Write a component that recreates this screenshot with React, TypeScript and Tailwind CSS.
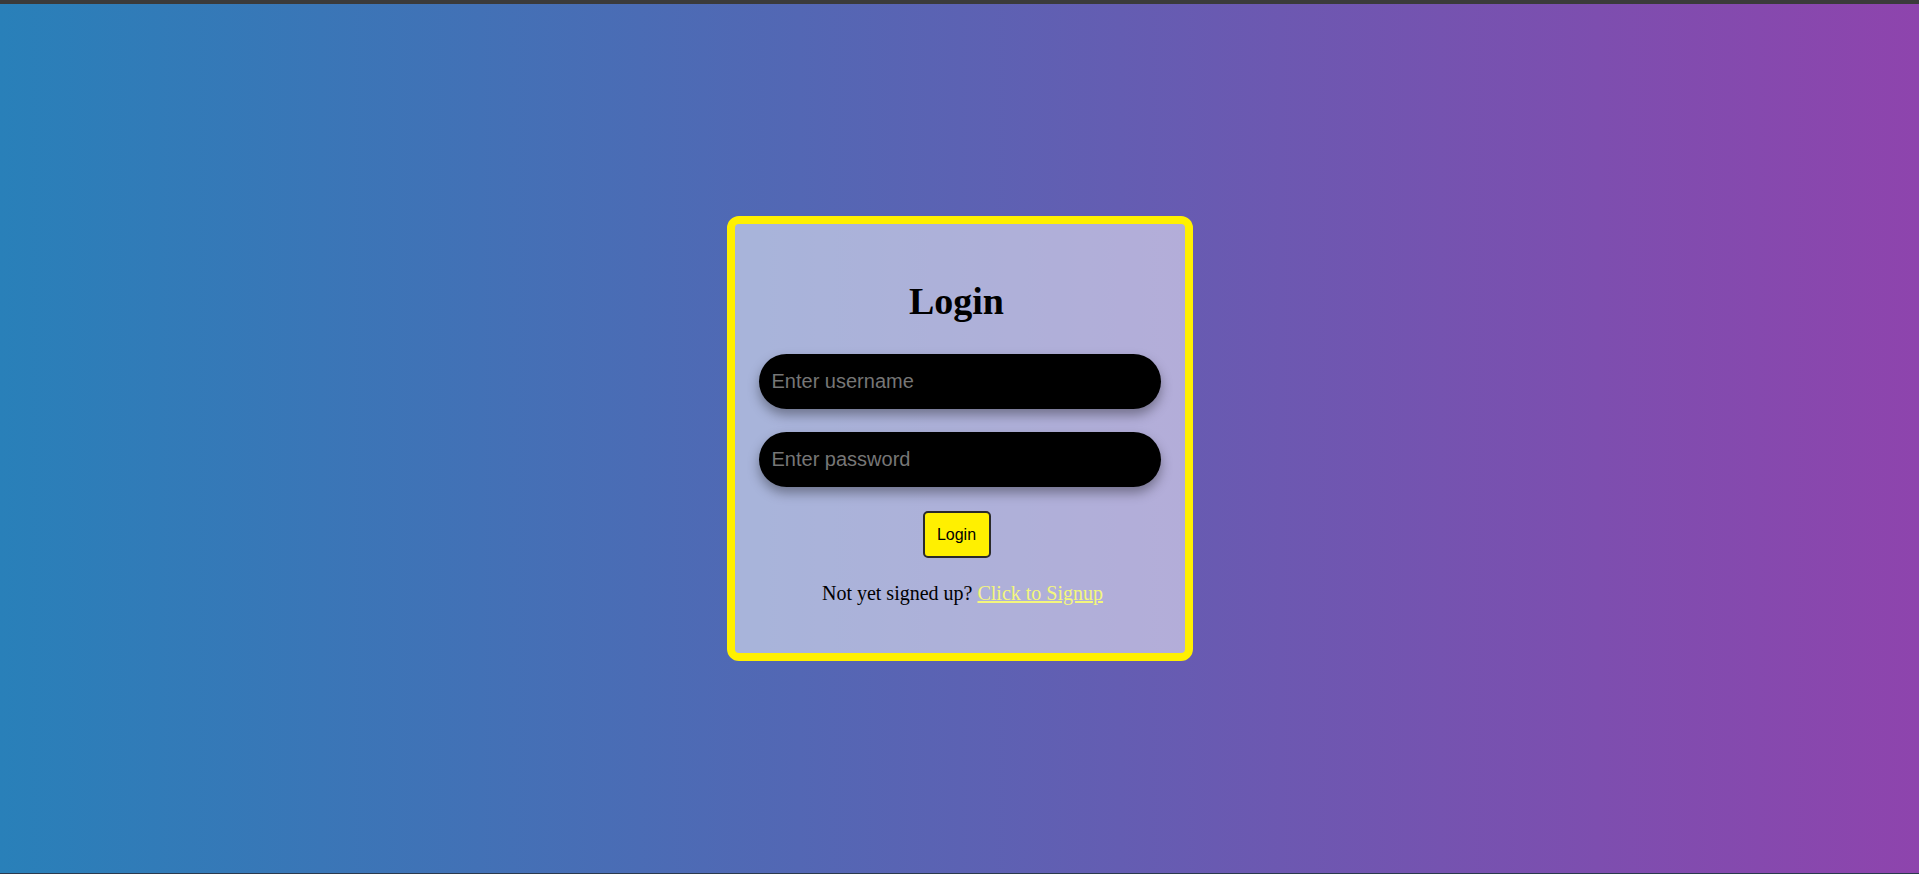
import React from "react";

export default function App() {
    return (
        <div className="flex flex-col h-[874px] w-full overflow-hidden">
            {/* top strip */}
            <div className="h-[4px] bg-[#3b3b3b]"></div>

            <div className="flex-1 flex items-center justify-center bg-[linear-gradient(to_right,#2980b9,#8e44ad)]">
                {/* Login card */}
                <div className="w-[466px] border-[8px] border-[#fff000] rounded-[12px] bg-white/50 flex flex-col items-center pt-[58px] pb-[50px]">
                    <h1 className="mr-[6px] text-[38px] leading-none font-bold text-black font-['Liberation_Serif','Times_New_Roman',serif]">
                        Login
                    </h1>

                    <div className="flex flex-col gap-[23px] mt-[34px] w-[402px]">
                        <input
                            type="text"
                            placeholder="Enter username"
                            className="h-[55px] w-full rounded-full bg-black px-[13px] text-[20px] text-white placeholder:text-[#767676] outline-none font-['Liberation_Sans',Arial,sans-serif] shadow-[0_6px_12px_rgba(0,0,0,0.35)]"
                        />
                        <input
                            type="password"
                            placeholder="Enter password"
                            className="h-[55px] w-full rounded-full bg-black px-[13px] text-[20px] text-white placeholder:text-[#767676] outline-none font-['Liberation_Sans',Arial,sans-serif] shadow-[0_6px_12px_rgba(0,0,0,0.35)]"
                        />
                    </div>

                    <button className="mt-[24px] mr-[6px] h-[47px] w-[68px] rounded-[5px] border-[2px] border-[#2a2a2a] bg-[#fff000] text-[16px] text-black font-['Liberation_Sans',Arial,sans-serif]">
                        Login
                    </button>

                    <p className="mt-[25px] ml-[6px] text-[20px] leading-none text-black font-['Liberation_Serif','Times_New_Roman',serif]">
                        Not yet signed up?{" "}
                        <a href="#" className="underline text-[#f4f77c]">
                            Click to Signup
                        </a>
                    </p>
                </div>
            </div>

            {/* bottom line */}
            <div className="h-[1px] bg-[#2b3a4d]"></div>
        </div>
    );
}
